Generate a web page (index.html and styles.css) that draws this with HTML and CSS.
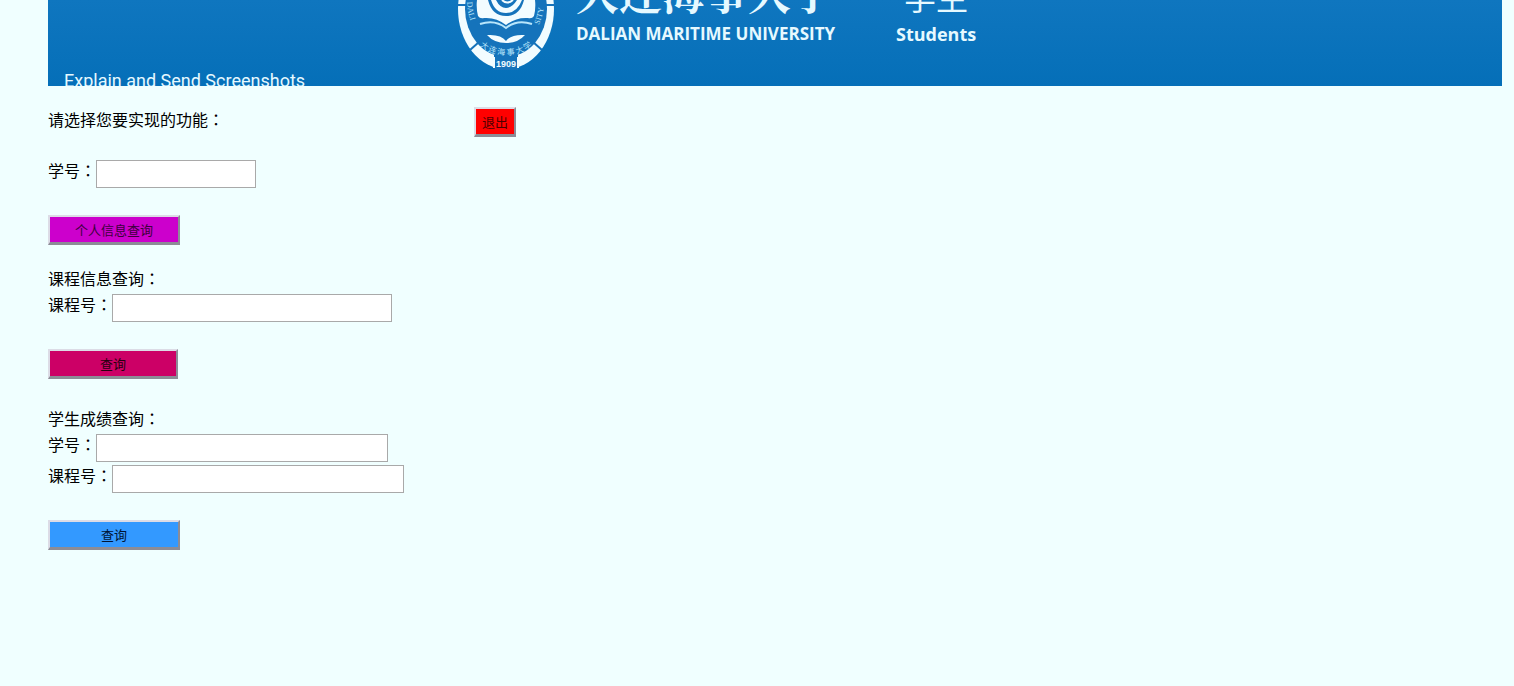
FILE: index.html
```html
<!DOCTYPE html>
<html lang="zh-CN">
<head>
<meta charset="utf-8">
<meta name="viewport" content="width=device-width, initial-scale=1">
<title>大连海事大学 学生</title>
<link rel="stylesheet" href="styles.css">
</head>
<body>
<header class="banner">
  <div class="brand">
    <svg class="crest" viewBox="0 0 100 72" aria-hidden="true">
      <ellipse cx="50" cy="9" rx="48" ry="60" fill="#f2fcff"/>
      <ellipse cx="50" cy="9" rx="41" ry="48" fill="#1573bb"/>
      <g stroke="#1573bb" stroke-width="2">
        <path d="M0 5h14M86 5h14M14 50l9-8M86 50l-9-8"/>
      </g>
      <path d="M38 54h24v16h-24z" fill="#1573bb"/>
      <path d="M38 57v11M62 57v11" stroke="#f2fcff" stroke-width="2"/>
      <path d="M21 0h58q1 8-1 16q-2 3-6 2q-12-1-22 7q-10-8-22-7q-4 1-6-2q-2-8-1-16z" fill="#f2fcff"/>
      <path d="M32 0q4 16 18 16q14 0 18-16z" fill="#1573bb"/>
      <path d="M35 0q4 13 15 13q11 0 16-13h-5q-5 8-11 8q-6 0-10-8z" fill="#f2fcff"/>
      <path d="M46 0q5 5 11 0" fill="none" stroke="#f2fcff" stroke-width="2"/>
      <path d="M24 24q15-5 26 4q11-9 26-4" fill="none" stroke="#b9e6fb" stroke-width="2"/>
      <path d="M31 35q14-1 19 6q5-7 19-6q-7 8-19 8q-12 0-19-8z" fill="#f2fcff"/>
      <path id="ring-left" d="M11 2q1 14 6 25" fill="none"/>
      <path id="ring-right" d="M83 25q5-12 5-25" fill="none"/>
      <path id="ring-low" d="M17 38q12 17 33 17q21 0 33-17" fill="none"/>
      <text class="crest-latin"><textPath href="#ring-left">DALI</textPath></text>
      <text class="crest-latin"><textPath href="#ring-right">SITY</textPath></text>
      <text class="crest-name"><textPath href="#ring-low" startOffset="50%">大 连 海 事 大 学</textPath></text>
      <text class="crest-year" x="50" y="67">1909</text>
    </svg>
    <div class="university">
      <div class="university-cn">大连海事大学</div>
      <div class="university-en">DALIAN MARITIME UNIVERSITY</div>
    </div>
    <div class="audience">
      <div class="audience-cn">学生</div>
      <div class="audience-en">Students</div>
    </div>
  </div>
  <div class="caption">Explain and Send Screenshots</div>
</header>
<main>
  <div class="intro">
    <p class="heading">请选择您要实现的功能<span class="colon" lang="zh-TW">：</span></p>
    <button class="btn btn-exit" type="button">退出</button>
  </div>
  <form class="section">
    <div class="field">
      <label for="student">学号<span class="colon" lang="zh-TW">：</span></label>
      <input id="student" class="short" type="text">
    </div>
    <button class="btn btn-profile" type="button">个人信息查询</button>
  </form>
  <form class="section">
    <h2 class="heading">课程信息查询<span class="colon" lang="zh-TW">：</span></h2>
    <div class="field">
      <label for="course">课程号<span class="colon" lang="zh-TW">：</span></label>
      <input id="course" class="medium" type="text">
    </div>
    <button class="btn btn-course" type="button">查询</button>
  </form>
  <form class="section section-grades">
    <h2 class="heading">学生成绩查询<span class="colon" lang="zh-TW">：</span></h2>
    <div class="field">
      <label for="grade-student">学号<span class="colon" lang="zh-TW">：</span></label>
      <input id="grade-student" class="long" type="text">
    </div>
    <div class="field">
      <label for="grade-course">课程号<span class="colon" lang="zh-TW">：</span></label>
      <input id="grade-course" class="long" type="text">
    </div>
    <button class="btn btn-grades" type="button">查询</button>
  </form>
</main>
</body>
</html>
```
FILE: styles.css
```css
* { box-sizing: border-box; }
body {
  margin: 0;
  padding: 0 12px 24px 48px;
  background: #f0ffff;
  color: #000;
  font: 16px/24px "Noto Sans CJK SC", sans-serif;
}
.colon { font-family: "Noto Sans CJK TC", sans-serif; }

.banner {
  height: 86px;
  overflow: hidden;
  background: linear-gradient(#0f76bf, #056fb8);
  color: #e6f9ff;
}
.brand {
  display: flex;
  align-items: flex-start;
  height: 68px;
  padding-left: 408px;
}
.crest { width: 100px; height: 72px; flex: none; }
.crest text { fill: #b9e6fb; }
.crest-latin { font: 8px "Liberation Serif", serif; }
.crest-name { font: 8px "Noto Sans CJK SC", sans-serif; text-anchor: middle; }
.crest .crest-year { font: bold 9px "Liberation Sans", sans-serif; text-anchor: middle; fill: #f2fcff; }
.university, .audience {
  display: flex;
  flex-direction: column;
  justify-content: flex-end;
  height: 48px;
  white-space: nowrap;
}
.university { margin-left: 20px; width: 256px; }
.university-cn {
  font: bold 43px/44px "Noto Serif CJK SC", "Noto Sans CJK SC", serif;
  margin-bottom: 6px;
}
.university-en { font: bold 17px/28px "Open Sans", sans-serif; }
.audience { margin-left: 64px; }
.audience-cn { font: 32px/36px "Noto Sans CJK SC", sans-serif; margin-bottom: 6px; text-align: center; }
.audience-en { font: bold 18px/28px "Open Sans", sans-serif; }
.caption { padding-left: 16px; font: 18px/26px Roboto, sans-serif; }

.intro { display: flex; align-items: flex-start; margin-top: 21px; }
.intro .heading { width: 426px; }
.heading { margin: 0; padding-bottom: 2px; font-size: 16px; font-weight: normal; line-height: 24px; }
.section { margin-top: 21px; }
.section-grades { margin-top: 27px; }
.intro + .section { margin-top: 23px; }
.field { display: flex; align-items: flex-start; }
.heading + .field { margin-top: 2px; }
.field + .field { margin-top: 3px; }
.field label { line-height: 20px; }
.field input {
  height: 28px;
  padding: 2px 4px;
  border: 1px solid #a9a9a9;
  background: #fff;
  font: inherit;
}
.short { width: 160px; }
.medium { width: 280px; }
.long { width: 292px; }
.btn {
  display: block;
  height: 30px;
  padding: 0;
  border: 2px solid;
  border-bottom-width: 3px;
  border-color: #dcdce6 #8c8c96 #8c8c96 #dcdce6;
  color: #000;
  font: 13px/24px "Noto Sans CJK SC", sans-serif;
}
.field + .btn { margin-top: 27px; }
.btn-exit { width: 42px; background: #f00; color: #4d0000; }
.btn-profile { width: 132px; background: #c0c; color: #3d003d; }
.btn-course { width: 130px; background: #c06; color: #26000f; }
.btn-grades { width: 132px; background: #39f; color: #001433; }
```
